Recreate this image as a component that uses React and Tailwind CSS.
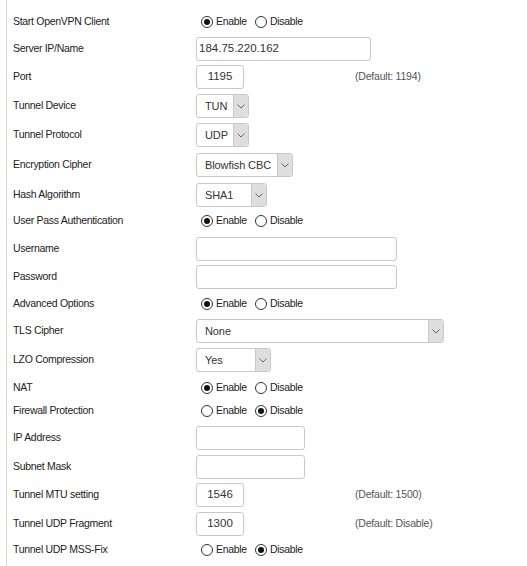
import React from "react";

const FONT = { fontFamily: '"Liberation Sans", Arial, sans-serif' };

function Radio({ checked }) {
  return (
    <span className="relative inline-block w-[12px] h-[12px] rounded-full border border-[#333] bg-white shrink-0">
      {checked && (
        <span className="absolute left-[2px] top-[2px] w-[6px] h-[6px] rounded-full bg-[#111]" />
      )}
    </span>
  );
}

function RadioPair({ on }) {
  return (
    <div className="flex items-center pl-[5px] text-[10.5px] tracking-[-0.3px] text-[#222]">
      <Radio checked={on} />
      <span className="ml-[3px]">Enable</span>
      <span className="ml-[8px]" />
      <Radio checked={!on} />
      <span className="ml-[3px]">Disable</span>
    </div>
  );
}

function TextInput({ w, value, center }) {
  return (
    <div
      className={`${w} h-[24px] shrink-0 border border-[#c9c9c9] rounded-[3px] bg-white flex items-center text-[11.5px] text-[#333] ${
        center ? "justify-center" : "pl-[2px]"
      }`}
    >
      {value}
    </div>
  );
}

function Select({ w, value }) {
  return (
    <div
      className={`${w} h-[24px] shrink-0 border border-[#c9c9c9] rounded-[3px] bg-white flex items-stretch overflow-hidden text-[11px] tracking-[-0.1px] text-[#333]`}
    >
      <div className="flex-1 flex items-center pl-[8px]">{value}</div>
      <div className="w-[15px] bg-[#dedede] border-l border-[#c9c9c9] flex items-center justify-center">
        <svg width="8" height="5" viewBox="0 0 8 5">
          <polyline points="0.5,0.5 4,4 7.5,0.5" fill="none" stroke="#666" strokeWidth="1" />
        </svg>
      </div>
    </div>
  );
}

const rows = [
  { label: "Start OpenVPN Client", type: "radio", on: true, mt: "mt-[10px]" },
  { label: "Server IP/Name", type: "input", w: "w-[175px]", value: "184.75.220.162", mt: "mt-[3px]" },
  { label: "Port", type: "input", w: "w-[48px]", value: "1195", center: true, note: "(Default: 1194)", mt: "mt-[4px]" },
  { label: "Tunnel Device", type: "select", w: "w-[53px]", value: "TUN", mt: "mt-[5px]" },
  { label: "Tunnel Protocol", type: "select", w: "w-[53px]", value: "UDP", mt: "mt-[5px]" },
  { label: "Encryption Cipher", type: "select", w: "w-[97px]", value: "Blowfish CBC", mt: "mt-[6px]" },
  { label: "Hash Algorithm", type: "select", w: "w-[71px]", value: "SHA1", mt: "mt-[6px]" },
  { label: "User Pass Authentication", type: "radio", on: true, mt: "mt-[2px]" },
  { label: "Username", type: "input", w: "w-[201px]", value: "", mt: "mt-[4px]" },
  { label: "Password", type: "input", w: "w-[201px]", value: "", mt: "mt-[4px]" },
  { label: "Advanced Options", type: "radio", on: true, mt: "mt-[3px]" },
  { label: "TLS Cipher", type: "select", w: "w-[248px]", value: "None", mt: "mt-[3px]" },
  { label: "LZO Compression", type: "select", w: "w-[75px]", value: "Yes", mt: "mt-[5px]" },
  { label: "NAT", type: "radio", on: true, mt: "mt-[4px]" },
  { label: "Firewall Protection", type: "radio", on: false, mt: "mt-[-1px]" },
  { label: "IP Address", type: "input", w: "w-[109px]", value: "", mt: "mt-[3px]" },
  { label: "Subnet Mask", type: "input", w: "w-[109px]", value: "", mt: "mt-[5px]" },
  { label: "Tunnel MTU setting", type: "input", w: "w-[48px]", value: "1546", center: true, note: "(Default: 1500)", mt: "mt-[4px]" },
  { label: "Tunnel UDP Fragment", type: "input", w: "w-[48px]", value: "1300", center: true, note: "(Default: Disable)", mt: "mt-[5px]" },
  { label: "Tunnel UDP MSS-Fix", type: "radio", on: false, mt: "mt-[2px]" },
];

export default function App() {
  return (
    <div className="w-[527px] h-[566px] bg-white overflow-hidden" style={FONT}>
      <div className="ml-[6px] h-full border-l border-[#d6d6d6] pl-[6px] flex flex-col">
        {rows.map((r, i) => (
          <div key={i} className={`flex items-center h-[24px] ${r.mt}`}>
            <div className="w-[183px] shrink-0 text-[10.5px] tracking-[-0.3px] text-[#222]">
              {r.label}
            </div>
            <div className="w-[159px] shrink-0 flex items-center">
              {r.type === "radio" && <RadioPair on={r.on} />}
              {r.type === "input" && <TextInput w={r.w} value={r.value} center={r.center} />}
              {r.type === "select" && <Select w={r.w} value={r.value} />}
            </div>
            {r.note && (
              <div className="text-[10.5px] tracking-[-0.2px] text-[#555]">{r.note}</div>
            )}
          </div>
        ))}
      </div>
    </div>
  );
}
